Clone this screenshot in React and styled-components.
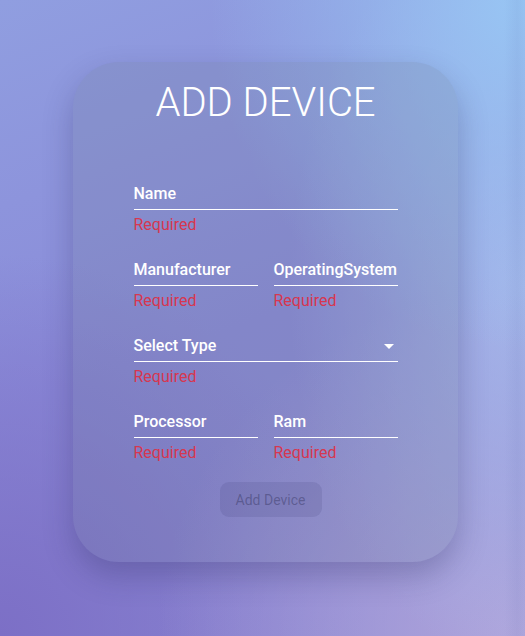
import React from 'react'
import styled, { createGlobalStyle } from 'styled-components'

const GlobalStyle = createGlobalStyle`
  html, body {
    margin: 0;
    padding: 0;
  }
  body {
    font-family: Roboto, "Liberation Sans", sans-serif;
  }
`

function Field({ label, select }) {
  return (
    <FieldBox>
      <Label>
        <span>{label}</span>
        {select && <Arrow />}
      </Label>
      <Helper>Required</Helper>
    </FieldBox>
  )
}

function App() {
  return (
    <Page>
      <GlobalStyle />
      <Card>
        <Title>ADD DEVICE</Title>
        <Form>
          <Field label='Name' />
          <Row>
            <Field label='Manufacturer' />
            <Field label='OperatingSystem' />
          </Row>
          <Field label='Select Type' select />
          <Row>
            <Field label='Processor' />
            <Field label='Ram' />
          </Row>
          <SubmitButton disabled>Add Device</SubmitButton>
        </Form>
      </Card>
    </Page>
  )
}

export default App

const Page = styled.div`
  width: 525px;
  height: 636px;
  box-sizing: border-box;
  padding: 62px 0 0 73px;
  overflow: hidden;
  background:
    linear-gradient(90deg, rgba(80, 90, 160, 0) 96%, rgba(80, 90, 160, 0.08) 98.5%, rgba(80, 90, 160, 0.03) 100%),
    radial-gradient(ellipse 60% 55% at 100% 0%, #98c6f4 0%, rgba(152, 198, 244, 0) 100%),
    radial-gradient(ellipse 45% 60% at 100% 45%, rgba(168, 188, 236, 0.9) 0%, rgba(168, 188, 236, 0) 100%),
    radial-gradient(ellipse 70% 55% at 100% 100%, #b0a6dc 0%, rgba(176, 166, 220, 0) 100%),
    radial-gradient(ellipse 70% 60% at 0% 100%, #7c6fc6 0%, rgba(124, 111, 198, 0) 100%),
    linear-gradient(160deg, #909ee0 0%, #8a8ad8 50%, #8c86d0 100%);
`

const Card = styled.div`
  width: 385px;
  height: 500px;
  box-sizing: border-box;
  padding: 16px 0 0;
  border-radius: 46px;
  background: rgba(110, 122, 150, 0.22);
  box-shadow: 0 14px 30px rgba(40, 40, 90, 0.28);
  display: flex;
  flex-direction: column;
  align-items: center;
`

const Title = styled.h1`
  margin: 0;
  font-size: 40px;
  font-weight: 300;
  line-height: 50px;
  color: #fff;
`

const Form = styled.div`
  width: 264px;
  margin-top: 57px;
  display: flex;
  flex-direction: column;
  gap: 27px;
  align-items: center;
`

const Row = styled.div`
  width: 100%;
  display: grid;
  grid-template-columns: 1fr 1fr;
  column-gap: 16px;
`

const FieldBox = styled.div`
  width: 100%;
  display: flex;
  flex-direction: column;
`

const Label = styled.div`
  display: flex;
  align-items: center;
  justify-content: space-between;
  font-size: 16px;
  font-weight: 500;
  line-height: 18px;
  color: #fff;
  padding-bottom: 6px;
  border-bottom: 1px solid #fff;
  white-space: nowrap;
`

const Arrow = styled.span`
  width: 0;
  height: 0;
  margin-right: 4px;
  border-left: 5px solid transparent;
  border-right: 5px solid transparent;
  border-top: 5px solid #fff;
`

const Helper = styled.div`
  margin-top: 5px;
  font-size: 16px;
  line-height: 19px;
  color: #d73750;
`

const SubmitButton = styled.button`
  margin: -7px 0 0 10px;
  width: 102px;
  height: 35px;
  border: none;
  border-radius: 9px;
  background: rgba(60, 60, 110, 0.14);
  color: rgba(40, 40, 80, 0.38);
  font-family: Roboto, "Liberation Sans", sans-serif;
  font-size: 14px;
  font-weight: 400;
  padding: 0;
`
